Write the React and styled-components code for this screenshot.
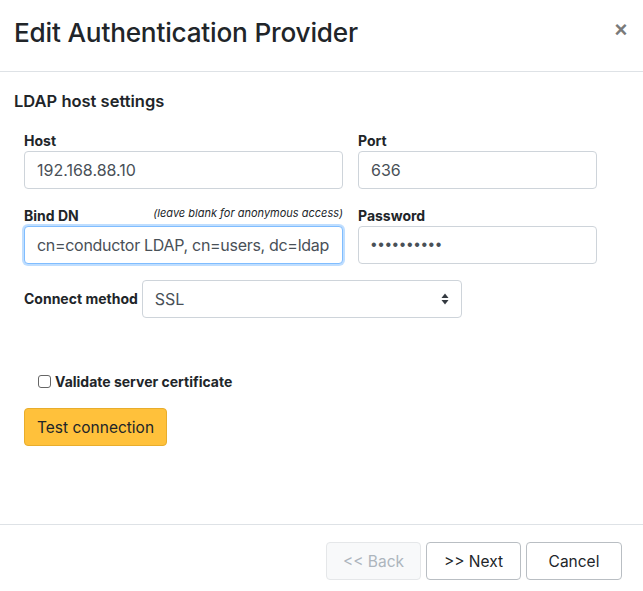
import React from 'react';
import styled, { createGlobalStyle } from 'styled-components';

const GlobalStyle = createGlobalStyle`
  body {
    margin: 0;
    background: #fff;
    font-family: Inter, "Liberation Sans", sans-serif;
    color: #212529;
  }
`;

const Modal = styled.div`
  width: 643px;
  height: 591px;
  display: flex;
  flex-direction: column;
  background: #fff;
`;

const Header = styled.div`
  height: 72px;
  box-sizing: border-box;
  padding: 14px 14px 0 14px;
  display: flex;
  justify-content: space-between;
  align-items: flex-start;
  border-bottom: 1px solid #dee2e6;
`;

const Title = styled.h4`
  margin: 0;
  font-size: 26.2px;
  font-weight: 500;
  line-height: 38px;
  letter-spacing: -0.2px;
  color: #212529;
`;

const Close = styled.button`
  border: none;
  background: none;
  padding: 0;
  margin-top: 6px;
  width: 16px;
  height: 20px;
  font-size: 22px;
  line-height: 20px;
  font-weight: 700;
  color: #7a7a7a;
  cursor: pointer;
  font-family: "Liberation Sans", sans-serif;
`;

const Body = styled.div`
  flex: 1;
  padding: 19px 14px 0 14px;
`;

const SectionTitle = styled.h5`
  margin: 0 0 19px 0;
  font-size: 16.5px;
  font-weight: 600;
  line-height: 20px;
`;

const Form = styled.div`
  padding-left: 10px;
`;

const Grid = styled.div`
  display: grid;
  grid-template-columns: 319px 239px;
  column-gap: 15px;
  row-gap: 16px;
`;

const Field = styled.div`
  display: flex;
  flex-direction: column;
`;

const LabelRow = styled.div`
  display: flex;
  justify-content: space-between;
  align-items: flex-end;
  height: 20px;
  margin-bottom: 1px;
`;

const Label = styled.label`
  font-size: 14px;
  font-weight: 650;
  line-height: 18px;
`;

const Hint = styled.span`
  font-size: 11px;
  font-style: italic;
  color: #212529;
  line-height: 14px;
  margin-bottom: 5px;
`;

const Input = styled.input`
  box-sizing: border-box;
  height: 38px;
  width: 100%;
  padding: 6px 12px;
  font-family: ${p => (p.type === 'password' ? '"Liberation Sans", sans-serif' : 'inherit')};
  font-size: 16px;
  color: #495057;
  border: 1px solid ${p => (p.$focus ? '#80bdff' : '#ced4da')};
  border-radius: 4px;
  box-shadow: ${p => (p.$focus ? '0 0 0 2px rgba(0,123,255,.25)' : 'none')};
  outline: none;
  letter-spacing: ${p => (p.type === 'password' ? '1.6px' : p.$tight ? '-0.3px' : '0')};
`;

const MethodRow = styled.div`
  display: flex;
  align-items: center;
  gap: 4px;
  margin-top: 16px;
`;

const Select = styled.div`
  box-sizing: border-box;
  width: 320px;
  height: 38px;
  padding: 0 12px;
  display: flex;
  align-items: center;
  justify-content: space-between;
  font-size: 16px;
  color: #495057;
  border: 1px solid #ced4da;
  border-radius: 4px;
`;

const CheckRow = styled.label`
  display: flex;
  align-items: center;
  gap: 4px;
  margin: 55px 0 0 14px;
  font-size: 14px;
  font-weight: 650;
`;

const Box = styled.span`
  box-sizing: border-box;
  width: 13px;
  height: 13px;
  border: 1px solid #666;
  border-radius: 3px;
  background: #fff;
`;

const Button = styled.button`
  box-sizing: border-box;
  height: 38px;
  padding: 0 12px;
  font-family: inherit;
  font-size: 15.5px;
  border-radius: 4px;
  cursor: pointer;
  border: 1px solid ${p => p.$border};
  background: ${p => p.$bg};
  color: ${p => p.$color};
  width: ${p => p.$width || 'auto'};
`;

const TestRow = styled.div`
  margin-top: 18px;
`;

const Footer = styled.div`
  border-top: 1px solid #dee2e6;
  height: 67px;
  box-sizing: border-box;
  padding: 17px 21px 0 0;
  display: flex;
  justify-content: flex-end;
  align-items: flex-start;
  gap: 5px;
`;

const Caret = () => (
  <svg width="8" height="12" viewBox="0 0 8 12">
    <path d="M4 0.5 L7.5 5 H0.5 Z" fill="#343a40" />
    <path d="M4 11.5 L7.5 7 H0.5 Z" fill="#343a40" />
  </svg>
);

export default function App() {
  return (
    <Modal>
      <GlobalStyle />
      <Header>
        <Title>Edit Authentication Provider</Title>
        <Close aria-label="Close">×</Close>
      </Header>
      <Body>
        <SectionTitle>LDAP host settings</SectionTitle>
        <Form>
          <Grid>
            <Field>
              <LabelRow><Label>Host</Label></LabelRow>
              <Input defaultValue="192.168.88.10" />
            </Field>
            <Field>
              <LabelRow><Label>Port</Label></LabelRow>
              <Input defaultValue="636" />
            </Field>
            <Field>
              <LabelRow>
                <Label>Bind DN</Label>
                <Hint>(leave blank for anonymous access)</Hint>
              </LabelRow>
              <Input $focus $tight defaultValue="cn=conductor LDAP, cn=users, dc=ldap.srv" />
            </Field>
            <Field>
              <LabelRow><Label>Password</Label></LabelRow>
              <Input type="password" defaultValue="secretpass" />
            </Field>
          </Grid>
          <MethodRow>
            <Label>Connect method</Label>
            <Select>
              <span>SSL</span>
              <Caret />
            </Select>
          </MethodRow>
          <CheckRow>
            <Box />
            Validate server certificate
          </CheckRow>
          <TestRow>
            <Button $bg="#ffc13b" $border="#e8ad2c" $color="#212529">Test connection</Button>
          </TestRow>
        </Form>
      </Body>
      <Footer>
        <Button $bg="#f8f9fa" $border="#e5e7e9" $color="#adb5bd" $width="95px" disabled>&lt;&lt; Back</Button>
        <Button $bg="#fff" $border="#b9bec3" $color="#212529" $width="95px">&gt;&gt; Next</Button>
        <Button $bg="#fff" $border="#b9bec3" $color="#212529" $width="96px">Cancel</Button>
      </Footer>
    </Modal>
  );
}
